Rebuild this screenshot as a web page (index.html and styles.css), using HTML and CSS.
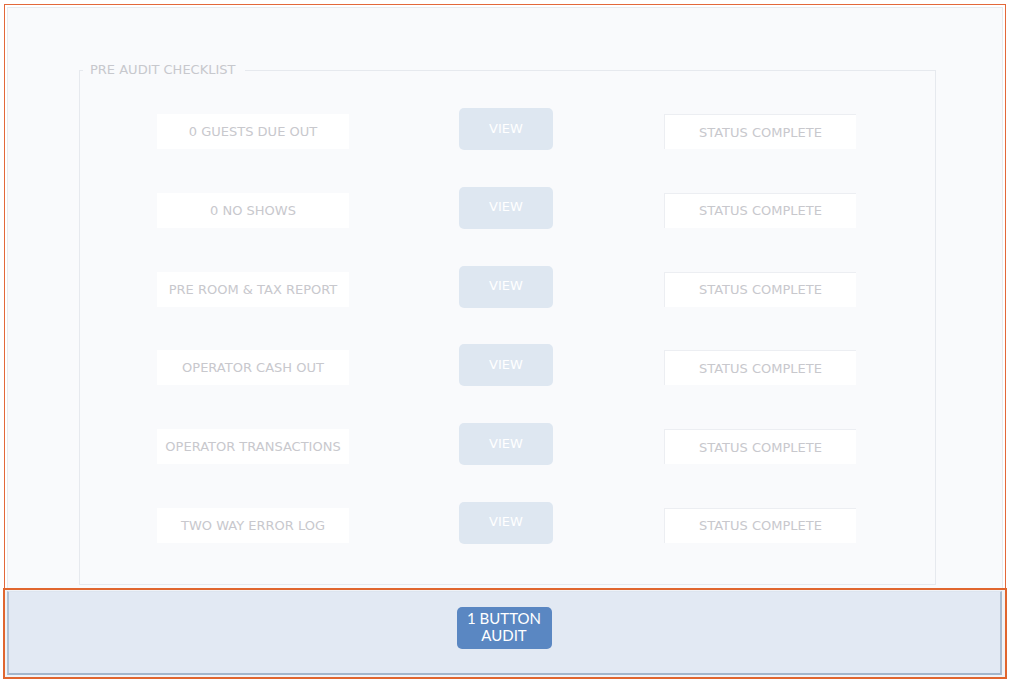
FILE: index.html
```html
<!DOCTYPE html>
<html>
<head>
<meta charset="utf-8">
<link rel="stylesheet" href="styles.css">
</head>
<body>
<div class="page">
  <div class="main">
    <div class="main-inner">
      <fieldset class="checklist">
        <legend>PRE AUDIT CHECKLIST</legend>
        <div class="grid">
          <div class="label">0 GUESTS DUE OUT</div>
          <div class="btn-view">VIEW</div>
          <div class="status">STATUS COMPLETE</div>

          <div class="label">0 NO SHOWS</div>
          <div class="btn-view">VIEW</div>
          <div class="status">STATUS COMPLETE</div>

          <div class="label">PRE ROOM &amp; TAX REPORT</div>
          <div class="btn-view">VIEW</div>
          <div class="status">STATUS COMPLETE</div>

          <div class="label">OPERATOR CASH OUT</div>
          <div class="btn-view">VIEW</div>
          <div class="status">STATUS COMPLETE</div>

          <div class="label">OPERATOR TRANSACTIONS</div>
          <div class="btn-view">VIEW</div>
          <div class="status">STATUS COMPLETE</div>

          <div class="label">TWO WAY ERROR LOG</div>
          <div class="btn-view">VIEW</div>
          <div class="status">STATUS COMPLETE</div>
        </div>
      </fieldset>
    </div>
  </div>
  <div class="footer">
    <div class="footer-inner">
      <div class="btn-audit">1 BUTTON<br>AUDIT</div>
    </div>
  </div>
</div>
</body>
</html>
```

FILE: styles.css
```css
* { box-sizing: border-box; }

html, body {
  margin: 0;
  padding: 0;
  background: #ffffff;
}

body {
  font-family: "DejaVu Sans", Verdana, sans-serif;
}

.page {
  width: 1010px;
  height: 682px;
  padding-top: 4px;
}

.main {
  margin: 0 4px;
  height: 584px;
  border: 1px solid #e3683a;
  border-bottom: none;
  background: #ffffff;
  padding: 2px 2px 0 2px;
}

.main-inner {
  height: 581px;
  border: 1px solid #e8ebef;
  border-bottom: none;
  background: #f9fafc;
  padding-top: 54px;
  padding-left: 71px;
}

.checklist {
  margin: 0;
  width: 857px;
  height: 523px;
  border: 1px solid #e6e9ee;
  padding: 0;
}

.checklist legend {
  margin-left: 3px;
  padding: 0 10px 0 7px;
  font-size: 13px;
  line-height: 16px;
  color: #c7c8cd;
}

.grid {
  display: grid;
  grid-template-columns: 192px 94px 193px;
  column-gap: 110px;
  row-gap: 36.8px;
  padding-top: 30px;
  padding-left: 77px;
  align-items: start;
}

.label,
.status {
  height: 35px;
  margin-top: 6px;
  background: #ffffff;
  color: #c8c8cd;
  font-size: 13px;
  display: flex;
  align-items: center;
  justify-content: center;
}

.status {
  margin-left: 1px;
  border-top: 1px solid #eceef2;
  border-left: 1px solid #eceef2;
}

.btn-view {
  height: 42px;
  border-radius: 5px;
  background: #dee7f1;
  color: #ffffff;
  font-size: 13px;
  display: flex;
  align-items: center;
  justify-content: center;
  padding-bottom: 2px;
}

.footer {
  margin: 0 3px;
  height: 91px;
  border: 2px solid #e0662f;
  background: #f0f3f7;
  padding: 1px 3px 2px 2px;
}

.footer-inner {
  height: 84px;
  background: #e2e9f3;
  border-left: 2px solid #b3c3d5;
  border-bottom: 2px solid #a3b6cb;
  border-right: 2px solid #a9bbcf;
  border-top: 1px solid #dde5ef;
  display: flex;
  justify-content: center;
  padding-top: 15px;
  padding-right: 1px;
}

.btn-audit {
  width: 95px;
  height: 42px;
  border-radius: 5px;
  background: #5a87c2;
  color: #ffffff;
  font-family: Lato, "Liberation Sans", sans-serif;
  font-size: 15px;
  line-height: 17px;
  text-align: center;
  padding-top: 3px;
}
```
